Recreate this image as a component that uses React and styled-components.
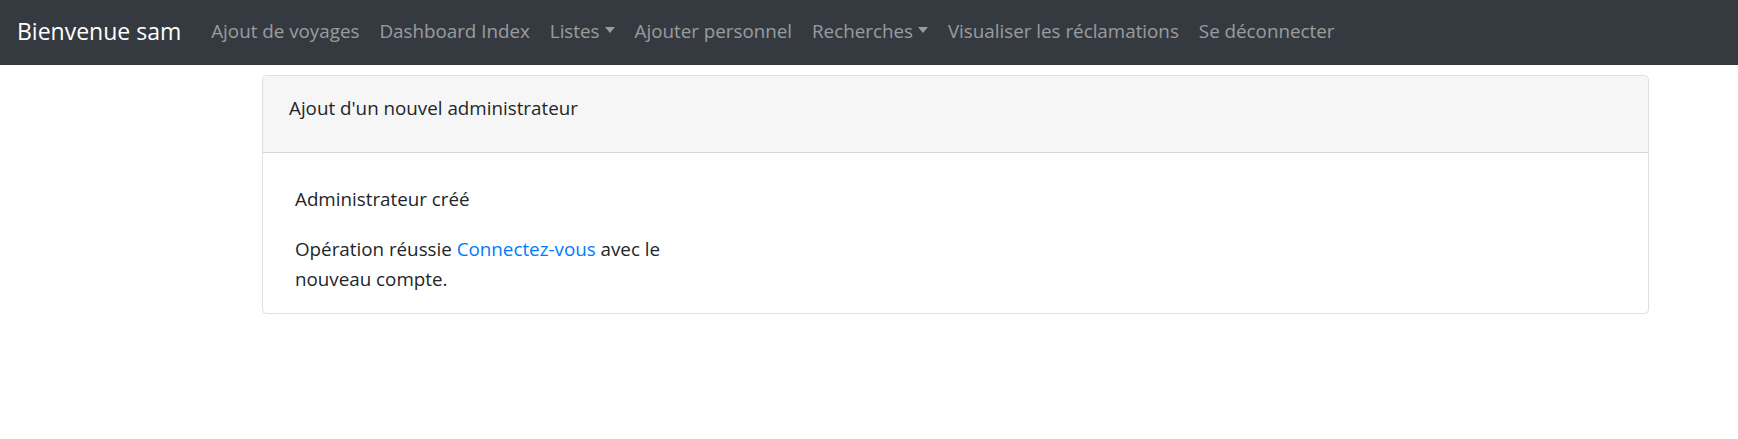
import React from 'react';
import styled, { createGlobalStyle } from 'styled-components';

const GlobalStyle = createGlobalStyle`
  body {
    margin: 0;
    background: #fff;
    font-family: "Open Sans", "Noto Sans", sans-serif;
    color: #212529;
  }
`;

const Navbar = styled.nav`
  display: flex;
  align-items: center;
  height: 65px;
  padding: 0 17px 3px;
  background: #343a40;
  box-sizing: border-box;
`;

const Brand = styled.a`
  font-size: 23px;
  color: #fff;
  margin-right: 20px;
  white-space: nowrap;
  text-decoration: none;
`;

const NavList = styled.ul`
  display: flex;
  list-style: none;
  margin: 0;
  padding: 0;
`;

const NavLink = styled.a`
  display: flex;
  align-items: center;
  padding: 0 10px;
  font-size: 18.8px;
  color: rgba(255, 255, 255, 0.5);
  white-space: nowrap;
  text-decoration: none;

  ${props => props.dropdown && `
    &::after {
      content: '';
      display: inline-block;
      margin-left: 5px;
      border-top: 6px solid;
      border-left: 5.5px solid transparent;
      border-right: 5.5px solid transparent;
      margin-top: -2px;
    }
  `}
`;

const Main = styled.main`
  padding: 10px 89px 0 262px;
`;

const Card = styled.section`
  border: 1px solid rgba(0, 0, 0, 0.125);
  border-radius: 4.5px;
  overflow: hidden;
`;

const CardHeader = styled.div`
  background: #f6f6f6;
  border-bottom: 1px solid rgba(0, 0, 0, 0.125);
  padding: 18px 26px 30px;
  font-size: 18.8px;
  line-height: 28px;
`;

const CardBody = styled.div`
  padding: 31px 32px 19px;
`;

const Text = styled.p`
  margin: 0 0 ${props => props.last ? 0 : 20}px;
  max-width: ${props => props.narrow ? '420px' : 'none'};
  font-size: 18.8px;
  line-height: 30px;
`;

const Link = styled.a`
  color: #007bff;
  text-decoration: none;
`;

const links = [
  { label: 'Ajout de voyages' },
  { label: 'Dashboard Index' },
  { label: 'Listes', dropdown: true },
  { label: 'Ajouter personnel' },
  { label: 'Recherches', dropdown: true },
  { label: 'Visualiser les réclamations' },
  { label: 'Se déconnecter' },
];

export default function App() {
  return (
    <>
      <GlobalStyle />
      <Navbar>
        <Brand href="#">Bienvenue sam</Brand>
        <NavList>
          {links.map(link => (
            <li key={link.label}>
              <NavLink href="#" dropdown={link.dropdown ? 1 : 0}>{link.label}</NavLink>
            </li>
          ))}
        </NavList>
      </Navbar>
      <Main>
        <Card>
          <CardHeader>Ajout d'un nouvel administrateur</CardHeader>
          <CardBody>
            <Text>Administrateur créé</Text>
            <Text narrow last>
              Opération réussie <Link href="#">Connectez-vous</Link> avec le nouveau compte.
            </Text>
          </CardBody>
        </Card>
      </Main>
    </>
  );
}
